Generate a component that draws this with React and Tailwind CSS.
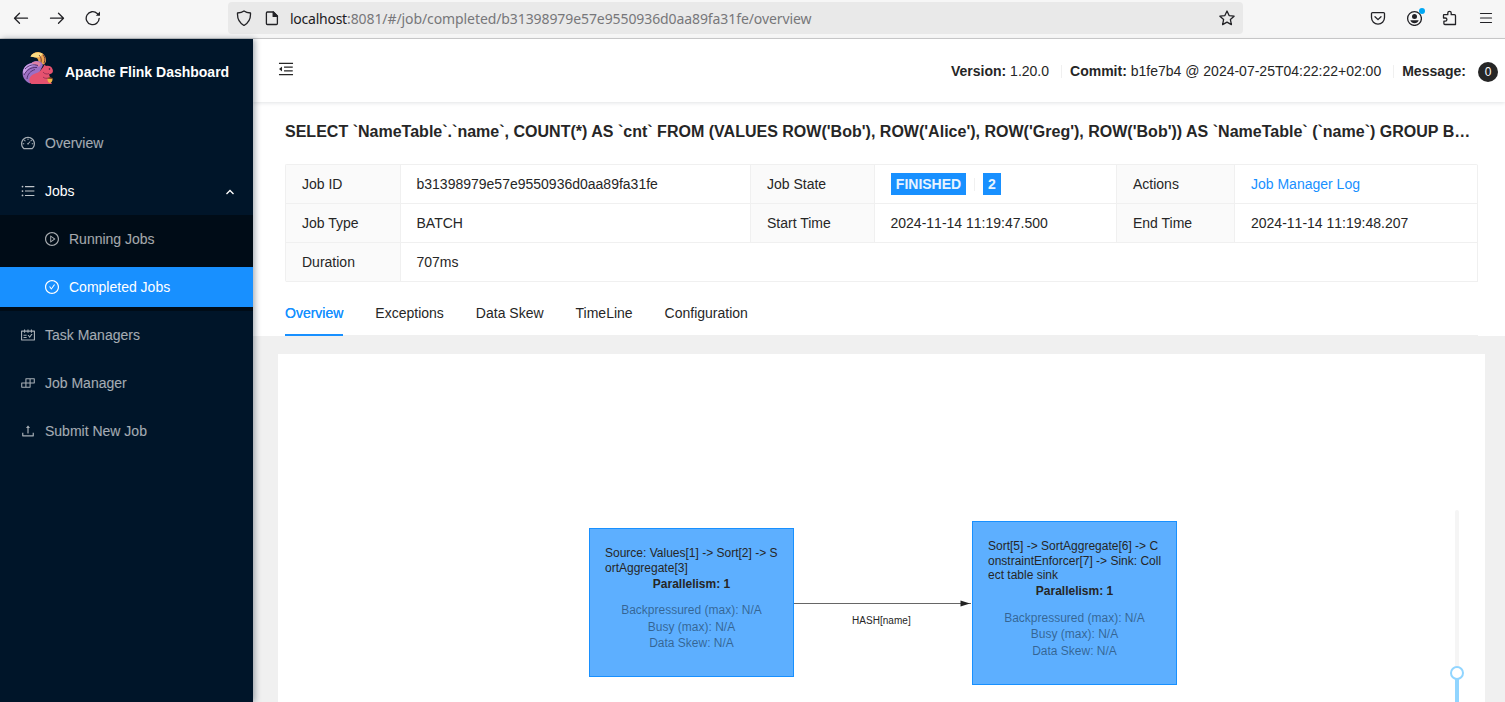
import React from "react";
import {
  AiOutlineDashboard,
  AiOutlineBars,
  AiOutlinePlayCircle,
  AiOutlineCheckCircle,
  AiOutlineSchedule,
  AiOutlineBuild,
  AiOutlineUpload,
  AiOutlineMenuFold,
} from "react-icons/ai";

const stroke = {
  fill: "none",
  stroke: "currentColor",
  strokeWidth: 1.3,
  strokeLinecap: "round",
  strokeLinejoin: "round",
};

function BrowserIcon({ children, className = "" }) {
  return (
    <svg width="16" height="16" viewBox="0 0 16 16" {...stroke} className={"shrink-0 " + className}>
      {children}
    </svg>
  );
}

function BrowserBar() {
  return (
    <div className="flex h-[39px] shrink-0 items-start border-b border-[#cccccc] bg-[#f6f6f6] pl-[13px] text-[#222226]">
      <div className="flex h-9 items-center gap-5">
        <BrowserIcon>
          <path d="M14.5 8.2H1.8M6.5 3.2l-5 5 5 5" />
        </BrowserIcon>
        <BrowserIcon>
          <path d="M1.5 8.2h12.7M9.5 3.2l5 5-5 5" />
        </BrowserIcon>
        <BrowserIcon>
          <path d="M14.2 8.3a6.5 6.5 0 1 1-2-4.8l1 1" />
          <path d="M15 1.6v4.2h-4.2z" fill="currentColor" stroke="none" />
        </BrowserIcon>
      </div>
      <div className="ml-[127px] mt-[2px] flex h-8 w-[1015px] items-center rounded-[4px] bg-[#e9e9e9] pl-2 pr-2">
        <BrowserIcon>
          <path d="M8 .9c2 1.500 4.300 1.900 6.500 2.100.3 5.500-1.800 10-6.500 12.500C3.300 13 1.200 8.500 1.500 3 3.700 2.800 6 2.400 8 .9z" />
        </BrowserIcon>
        <BrowserIcon className="ml-[12px]">
          <path d="M3.400 2h6l4 4v7.500a1 1 0 0 1-1 1h-9a1 1 0 0 1-1-1V3a1 1 0 0 1 1-1z" />
          <path d="M9.200 2v4.400h4.300z" fill="currentColor" />
        </BrowserIcon>
        <div className="ml-[10px] mt-px whitespace-nowrap font-['Noto_Sans',sans-serif] text-[14px] leading-5 text-[#77777a]">
          <span className="inline-block w-[57px] tracking-[-0.25px] text-[#1c1b22]">localhost</span>
          <span className="tracking-[-0.090px]">:8081/#/job/completed/b31398979e57e9550936d0aa89fa31fe/overview</span>
        </div>
        <BrowserIcon className="ml-auto">
          <path d="M8 1l2.100 4.600 5 .6-3.700 3.400 1 5L8 12.100l-4.400 2.500 1-5L.9 6.200l5-.6z" />
        </BrowserIcon>
      </div>
      <div className="ml-[127px] flex h-9 items-center">
        <BrowserIcon>
          <path d="M2.500 2.600h11a1 1 0 0 1 1 1v4a6.500 6.500 0 0 1-13 0v-4a1 1 0 0 1 1-1z" />
          <path d="M5 6.700l3 2.900 3-2.900" />
        </BrowserIcon>
        <div className="relative ml-[20px]">
          <BrowserIcon>
            <circle cx="8.500" cy="8.500" r="6.900" strokeWidth="1.300" />
            <circle cx="8.500" cy="6.500" r="2.500" fill="currentColor" stroke="none" />
            <path d="M4.300 10.200h8.400c-.6 2-2.300 3-4.200 3s-3.600-1-4.200-3z" fill="currentColor" stroke="none" />
          </BrowserIcon>
          <span className="absolute left-[13px] top-[-2px] h-[6px] w-[6px] rounded-full bg-[#00a8f4]" />
        </div>
        <BrowserIcon className="ml-[20px]">
          <path d="M2 4.700h3.800V3a1.700 1.700 0 0 1 3.400 0v1.700h3.300a1 1 0 0 1 1 1v8.800H2.900a1 1 0 0 1-1-1v-2.300h1.400a1.600 1.600 0 0 0 0-3.200H1.500V5.200a.5.5 0 0 1 .5-.5z" />
        </BrowserIcon>
        <BrowserIcon className="ml-[20px]">
          <path d="M2.500 3.500h11M2.500 8h11M2.500 12.500h11" strokeWidth="1.200" />
        </BrowserIcon>
      </div>
    </div>
  );
}

function SquirrelLogo() {
  return (
    <svg width="34" height="34" viewBox="0 0 34 34" className="shrink-0">
      <path d="M9.500 5.500C11 2 15 .5 18.500 1.200c4 .8 6 3.800 6.500 7.300.2 2-.5 3.500-2 5l-6-1c1-3 0-5-2-6z" fill="#eca24a" />
      <path d="M9.500 5.500c2-4 8-5 12-3l-2 3.500-5 .5z" fill="#fbdc84" />
      <path d="M18 4c2 2 3 5 1.500 9M22 4c2 2 2.500 5 1 8" stroke="#5d2b3a" strokeWidth=".9" fill="none" />
      <path d="M22 14c-1-3-4-4.500-7-4-2 .2-3.500 1-4.500 2-4 .6-7.500 4-8.700 8-1 5 1.500 10 7.200 12.500l8-8z" fill="#9c6fc4" />
      <path d="M20 13c-2-3-7-3.500-10 0 3-.5 6 .5 8 3z" fill="#dd80a4" />
      <path d="M2 21c.5-5 4-8 9-8.500l4 2c-6 .5-10 4-11.500 9z" fill="#c9a0e8" />
      <path d="M4 18c4-4 8-5 13-3.500M3 24c2.500-5 7-8 13-7.500M6 28c.5-5 3.500-8 8-9.500" stroke="#4b2c66" strokeWidth=".9" fill="none" />
      <path d="M22.500 15.500l1-2 1.500 1.500c3-.6 5.500.5 6.500 3 .8 2 .5 3.500-1 4.500l-2.500 1 1 2.500-1.500 2 3.500 5H10.500C8 31.500 7.500 28 10 25c2.500-2.500 6-2.500 8.500-4.500 1.500-1.200 2.500-3 4-5z" fill="#e6526f" />
      <path d="M22 21c1.500 2 4 2.500 6 1.500M22 26c1.500 1.500 3.500 1.500 5.500 1" stroke="#8a2b4d" strokeWidth=".8" fill="none" />
      <circle cx="28.500" cy="18" r=".8" fill="#351b30" />
      <path d="M26.500 27.500h5c.2 2.500-.8 4-2.500 4.500-1.800-.5-2.700-2-2.500-4.500z" fill="#f2b446" />
      <path d="M26.300 27.800c.5-2 4.700-2 5.400 0z" fill="#8c4c23" />
    </svg>
  );
}

function MenuIcon({ icon: Icon, className = "" }) {
  return <Icon size={16} className={"-mx-px shrink-0 " + className} />;
}

function MenuItem({ icon, label }) {
  return (
    <a className="flex h-10 items-center gap-[10px] pl-[21px] text-white/65">
      <MenuIcon icon={icon} />
      {label}
    </a>
  );
}

function Sidebar() {
  return (
    <aside className="z-10 flex w-[253px] shrink-0 flex-col bg-[#001529] text-[14px] shadow-[2px_0_6px_rgba(0,21,41,0.35)]">
      <div className="flex h-16 items-center pl-[21px] pt-[2px]">
        <div className="-mt-[8px]">
          <SquirrelLogo />
        </div>
        <h1 className="ml-[10px] text-[14px] font-bold text-white">Apache Flink Dashboard</h1>
      </div>
      <nav className="flex flex-col pt-5">
        <MenuItem icon={AiOutlineDashboard} label="Overview" />
        <div className="mt-2 flex h-10 items-center gap-[10px] pl-[21px] pr-[18px] text-white">
          <MenuIcon icon={AiOutlineBars} className="text-white/75" />
          Jobs
          <svg width="10" height="10" viewBox="0 0 10 10" className="ml-auto mt-px">
            <path d="M1.500 7L5 3.500L8.500 7" fill="none" stroke="currentColor" strokeWidth="1.300" />
          </svg>
        </div>
        <div className="my-1 flex flex-col gap-2 bg-[#000c17] py-1">
          <a className="flex h-10 items-center gap-[10px] pl-[45px] text-white/65">
            <MenuIcon icon={AiOutlinePlayCircle} />
            Running Jobs
          </a>
          <a className="flex h-10 items-center gap-[10px] bg-[#1890ff] pl-[45px] text-white">
            <MenuIcon icon={AiOutlineCheckCircle} />
            Completed Jobs
          </a>
        </div>
        <div className="flex flex-col gap-2">
          <MenuItem icon={AiOutlineSchedule} label="Task Managers" />
          <MenuItem icon={AiOutlineBuild} label="Job Manager" />
          <MenuItem icon={AiOutlineUpload} label="Submit New Job" />
        </div>
      </nav>
    </aside>
  );
}

function Divider({ className = "" }) {
  return <span className={"h-[13px] w-px shrink-0 bg-[#f0f0f0] " + className} />;
}

function Header() {
  return (
    <header className="z-[5] flex h-[63px] shrink-0 items-center bg-white pl-6 pr-[7px] pt-px shadow-[0_1px_4px_rgba(0,21,41,0.12)]">
      <AiOutlineMenuFold size={18} className="-mt-1" />
      <div className="ml-auto flex items-center whitespace-nowrap">
        <span>
          <strong>Version:</strong> 1.20.0
        </span>
        <Divider className="ml-[12px] mr-[8px]" />
        <span>
          <strong>Commit:</strong> b1fe7b4 @ 2024-07-25T04:22:22+02:00
        </span>
        <Divider className="ml-[12px] mr-[8px]" />
        <strong>Message:</strong>
        <span className="ml-[12px] mt-[2px] flex h-5 w-5 items-center justify-center rounded-full bg-[#262626] text-[12px] text-white">
          0
        </span>
      </div>
    </header>
  );
}

function Label({ children }) {
  return <div className="flex items-center border-b border-r border-[#f0f0f0] bg-[#fafafa] px-4">{children}</div>;
}

function Value({ children, className = "" }) {
  return (
    <div className={"flex items-center border-b border-r border-[#f0f0f0] px-4 [font-kerning:none] " + className}>
      {children}
    </div>
  );
}

function JobDetails() {
  return (
    <div className="mt-5 grid w-[1193px] auto-rows-[39px] grid-cols-[115px_350px_124px_242px_118px_243px] rounded-[2px] border-l border-t border-[#f0f0f0]">
      <Label>Job ID</Label>
      <Value>
        <span className="-ml-[0.500px]">b31398979e57e9550936d0aa89fa31fe</span>
      </Value>
      <Label>Job State</Label>
      <Value>
        <span className="flex h-[22px] w-[75px] items-center justify-center bg-[#1890ff] font-bold text-white/90">
          FINISHED
        </span>
        <Divider className="mx-[8px]" />
        <span className="flex h-[22px] items-center bg-[#1890ff] px-[5px] font-bold text-white/90">2</span>
      </Value>
      <Label>Actions</Label>
      <Value>
        <a className="text-[#1890ff]">Job Manager Log</a>
      </Value>
      <Label>Job Type</Label>
      <Value>
        <span className="-ml-[0.500px] [font-kerning:normal]">BATCH</span>
      </Value>
      <Label>Start Time</Label>
      <Value>
        <span className="-ml-[0.500px]">2024-11-14 11:19:47.500</span>
      </Value>
      <Label>End Time</Label>
      <Value>2024-11-14 11:19:48.207</Value>
      <Label>Duration</Label>
      <Value className="col-span-5">
        <span className="-ml-[0.500px]">707ms</span>
      </Value>
    </div>
  );
}

function Tabs() {
  return (
    <div className="mt-2 flex h-[46px] w-[1193px] gap-8 border-b border-[#f0f0f0]">
      <div className="-mb-px flex items-center border-b-2 border-[#1890ff] pt-[2px] text-[#1890ff] [text-shadow:0_0_0.25px_currentcolor]">
        Overview
      </div>
      {["Exceptions", "Data Skew", "TimeLine", "Configuration"].map((tab) => (
        <div key={tab} className="flex items-center pt-px">
          {tab}
        </div>
      ))}
    </div>
  );
}

function JobNode({ className, lines }) {
  return (
    <div
      className={
        "absolute w-[205px] border border-[#1890ff] bg-[#5dafff] px-[15px] pt-[17px] text-[12px] leading-[14.500px] " +
        className
      }
    >
      {lines.map((line) => (
        <div key={line} className="whitespace-nowrap">
          {line}
        </div>
      ))}
      <div className="mt-[1.500px] text-center font-bold">Parallelism: 1</div>
      <div className="mt-[11px] text-center leading-[16.500px] text-[#000000d9] opacity-50">
        <div>Backpressured (max): N/A</div>
        <div>Busy (max): N/A</div>
        <div>Data Skew: N/A</div>
      </div>
    </div>
  );
}

function JobGraph() {
  return (
    <div className="relative ml-[25px] mr-5 mt-[18px] flex-1 overflow-hidden bg-white">
      <JobNode
        className="left-[311px] top-[174px] h-[149px]"
        lines={["Source: Values[1] -> Sort[2] -> S", "ortAggregate[3]"]}
      />
      <svg className="absolute left-[516px] top-[244px]" width="178" height="12" viewBox="0 0 178 12">
        <path d="M0 5.500H177" stroke="#666" strokeWidth="1" />
        <path d="M166.500 2.500L176 5.500L166.500 8.500z" fill="#222" />
      </svg>
      <span className="absolute left-[574px] top-[259px] text-[10px] leading-[15px] tracking-[0.040px]">HASH[name]</span>
      <JobNode
        className="left-[694px] top-[167px] h-[164px]"
        lines={["Sort[5] -> SortAggregate[6] -> C", "onstraintEnforcer[7] -> Sink: Coll", "ect table sink"]}
      />
      <div className="absolute left-[1177px] top-[156px] h-[220px] w-1 rounded-[2px] bg-[#f5f5f5]" />
      <div className="absolute left-[1177px] top-[319px] h-[40px] w-1 bg-[#91d5ff]" />
      <div className="absolute left-[1172px] top-[312px] h-[14px] w-[14px] rounded-full border-2 border-[#91d5ff] bg-white" />
    </div>
  );
}

export default function App() {
  return (
    <div className="flex h-[702px] w-[1505px] flex-col overflow-hidden bg-white font-['Liberation_Sans',Arial,sans-serif] text-[14px] leading-[22px] text-[#262626]">
      <BrowserBar />
      <div className="flex min-h-0 flex-1">
        <Sidebar />
        <main className="flex min-w-0 flex-1 flex-col bg-[#f0f0f0]">
          <Header />
          <section className="flex shrink-0 flex-col bg-white pl-8 pr-[27px] pt-[18px]">
            <h2 className="whitespace-nowrap text-[16px] font-bold leading-6 tracking-[0.012px]">
              {
                "SELECT `NameTable`.`name`, COUNT(*) AS `cnt` FROM (VALUES ROW('Bob'), ROW('Alice'), ROW('Greg'), ROW('Bob')) AS `NameTable` (`name`) GROUP B…"
              }
            </h2>
            <JobDetails />
            <Tabs />
          </section>
          <JobGraph />
        </main>
      </div>
    </div>
  );
}
